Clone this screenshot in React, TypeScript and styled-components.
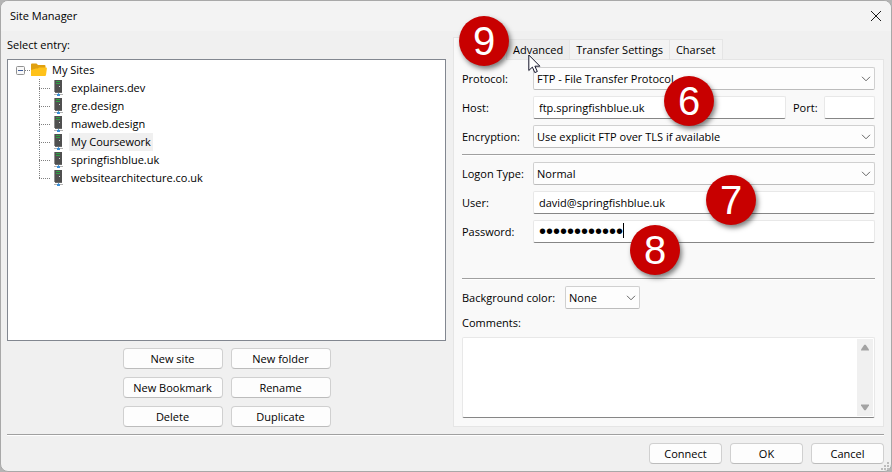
import React, { useState } from "react";
import styled, { createGlobalStyle } from "styled-components";

const GlobalStyle = createGlobalStyle`
  *, *::before, *::after { box-sizing: border-box; }
  html, body, #root { height: 100%; }
  body { margin: 0; background: #b4b4b4; }
  body, button, input, select, textarea {
    font-family: "Open Sans", "Noto Sans", sans-serif;
    font-size: 11px;
    line-height: 16px;
    color: #000;
  }
`;

const Dialog = styled.main`
  min-height: 100%;
  display: flex;
  flex-direction: column;
  background: #f0f0f0;
  border: 1px solid #a8a8a8;
  border-radius: 8px;
  overflow: hidden;
`;

const TitleBar = styled.header`
  display: flex;
  align-items: center;
  justify-content: space-between;
  height: 30px;
  padding: 0 9px;
  background: #f3f3f3;
`;

const Title = styled.h1`
  margin: 0;
  font-size: 11px;
  font-weight: 400;
`;

const CloseButton = styled.button`
  display: flex;
  padding: 0;
  border: 0;
  background: none;
`;

const Body = styled.div`
  flex: 1;
  display: grid;
  grid-template-columns: minmax(0, 439fr) minmax(0, 431fr);
  gap: 7px;
  padding: 6px 7px 7px 6px;
`;

const EntryColumn = styled.section`
  display: flex;
  flex-direction: column;
`;

const EntryLabel = styled.h2`
  margin: 0 0 6px;
  font-size: 11px;
  font-weight: 400;
`;

const TreeBox = styled.div`
  flex: 1;
  padding: 1px 8px;
  background: #fff;
  border: 1px solid #828790;
`;

const RootRow = styled.div`
  display: flex;
  align-items: center;
  height: 18px;
`;

const Expander = styled.button`
  display: flex;
  width: 9px;
  height: 9px;
  padding: 0;
  border: 0;
  background: none;
`;

const Dots = styled.span<{ $width: number }>`
  width: ${(p) => p.$width}px;
  height: 1px;
  background: repeating-linear-gradient(90deg, #808080 0 1px, transparent 1px 2px);
`;

const Branch = styled.ul`
  margin: 0 0 0 23px;
  padding: 0;
  list-style: none;
`;

const Leaf = styled.li`
  display: flex;
  align-items: center;
  height: 18px;
  background: repeating-linear-gradient(180deg, #808080 0 1px, transparent 1px 2px) 0 0 / 1px 100% no-repeat;

  &:last-child { background-size: 1px 50%; }
  svg { margin: 0 6px 0 4px; }
`;

const TreeLabel = styled.span<{ $selected?: boolean }>`
  padding: 1px 2px;
  background: ${(p) => (p.$selected ? "#f0f0f0" : "transparent")};
`;

const RootLabel = styled(TreeLabel)`
  margin-left: 3px;
`;

const ActionGrid = styled.div`
  display: grid;
  grid-template-columns: repeat(2, 100px);
  justify-content: center;
  gap: 8px;
  padding-top: 7px;
`;

const PushButton = styled.button`
  height: 21px;
  padding: 0 4px;
  background: #fdfdfd;
  border: 1px solid #d0d0d0;
  border-bottom-color: #bcbcbc;
  border-radius: 4px;
  white-space: nowrap;
`;

const Notebook = styled.section`
  display: flex;
  flex-direction: column;
`;

const TabList = styled.div`
  position: relative;
  display: flex;
  align-items: flex-end;
  height: 22px;
`;

const Tab = styled.button<{ $state?: "active" | "hover" }>`
  position: relative;
  height: ${(p) => (p.$state === "active" ? 23 : 20)}px;
  min-width: ${(p) => (p.$state === "active" ? 54 : 0)}px;
  margin-bottom: ${(p) => (p.$state === "active" ? -1 : 0)}px;
  padding: 0 6px;
  background: ${(p) => (p.$state === "active" ? "#f9f9f9" : p.$state === "hover" ? "#ececec" : "#f3f3f3")};
  border: 1px solid #e5e5e5;
  border-bottom: 0;
  border-left-width: ${(p) => (p.$state === "active" ? 1 : 0)}px;
  white-space: nowrap;
  z-index: ${(p) => (p.$state ? 1 : 0)};
`;

const Pointer = styled.svg`
  position: absolute;
  left: 21px;
  top: 14px;
  pointer-events: none;
`;

const Page = styled.form`
  flex: 1;
  display: flex;
  flex-direction: column;
  padding: 7px 8px 8px;
  background: #f9f9f9;
  border: 1px solid #e5e5e5;
`;

const Rows = styled.div`
  display: flex;
  flex-direction: column;
  gap: 6px;
`;

const Row = styled.div`
  display: flex;
  align-items: center;
  height: 23px;
`;

const RowLabel = styled.label`
  flex: 0 0 71px;
  white-space: nowrap;
`;

const ColorLabel = styled.label`
  flex: 0 0 103px;
  white-space: nowrap;
`;

const PortLabel = styled.label`
  flex: 0 0 38px;
  padding-left: 7px;
`;

const Field = styled.div<{ $width?: number }>`
  position: relative;
  flex: ${(p) => (p.$width ? `0 0 ${p.$width}px` : "1 1 0")};
  min-width: 0;
  display: flex;
  height: 23px;
`;

const TextInput = styled.input`
  width: 100%;
  padding: 0 5px;
  background: #fff;
  border: 1px solid #e8e8e8;
  border-bottom-color: #868686;
  border-radius: 2px;
  outline: none;

  &[type="password"] { font: 20px/20px "Liberation Sans", Arial, sans-serif; }
`;

const DropDown = styled.select`
  appearance: none;
  width: 100%;
  padding: 0 20px 0 3px;
  background: #fdfdfd;
  border: 1px solid #d0d0d0;
  border-bottom-color: #bcbcbc;
  border-radius: 2px;
  outline: none;
`;

const Chevron = styled.svg`
  position: absolute;
  right: 4px;
  top: 9px;
  pointer-events: none;
`;

const Caret = styled.span`
  position: absolute;
  left: 90px;
  top: 3px;
  width: 1px;
  height: 15px;
  background: #000;
`;

const Rule = styled.hr<{ $before: number }>`
  width: 100%;
  height: 2px;
  margin: ${(p) => p.$before}px 0 6px;
  border: 0;
  border-top: 1px solid #a0a0a0;
  border-bottom: 1px solid #fff;
`;

const CommentsLabel = styled.label`
  margin: 6px 0;
`;

const CommentsBox = styled.div`
  flex: 1;
  display: flex;
  min-height: 81px;
  padding: 1px;
  background: #fff;
  border: 1px solid #e8e8e8;
  border-bottom-color: #868686;
  border-radius: 2px;
`;

const Comments = styled.textarea`
  flex: 1;
  min-width: 0;
  padding: 2px 4px;
  border: 0;
  outline: none;
  resize: none;
  background: none;
`;

const ScrollTrack = styled.div`
  display: flex;
  flex-direction: column;
  align-items: center;
  justify-content: space-between;
  width: 16px;
  padding: 5px 0;
  background: #f0f0f0;
`;

const ScrollButton = styled.button`
  display: flex;
  padding: 0;
  border: 0;
  background: none;
`;

const Badge = styled.span<{ $left: number; $top: number }>`
  position: absolute;
  left: ${(p) => p.$left}px;
  top: ${(p) => p.$top}px;
  z-index: 2;
  width: 50px;
  height: 50px;
  border-radius: 50%;
  background: #c80000;
  box-shadow: 2px 3px 5px rgba(0, 0, 0, 0.5);
  color: #fff;
  font: 40px/50px "Liberation Sans", Arial, sans-serif;
  text-align: center;
  pointer-events: none;
`;

const Footer = styled.footer`
  position: relative;
  display: flex;
  justify-content: flex-end;
  gap: 8px;
  margin: 0 7px 0 6px;
  padding: 8px 0 7px;
  border-top: 1px solid #a0a0a0;
  box-shadow: inset 0 1px #fff;

  ${PushButton} { width: 73px; }
`;

const Grip = styled.svg`
  position: absolute;
  right: -5px;
  bottom: 1px;
`;

const ServerIcon = () => (
  <svg width="9" height="16" viewBox="0 0 9 16" aria-hidden="true">
    <path d="M1 0h7v12H1z" fill="#505050" />
    <path d="M0 0h1v12H0z" fill="#909090" />
    <path d="M2 1.500h4M2 3.500h4" stroke="#2fa044" />
    <path d="M5 6h1v1H5z" fill="#ddd" />
    <path d="M1 12h7v1H1z" fill="#6b6b6b" />
    <path d="M4 13h1v1H4z" fill="#5c9cd0" />
    <path d="M0 14h9v1H0z" fill="#b4b4b4" />
    <path d="M3 14h3v2H3z" fill="#3c90d8" />
  </svg>
);

const FolderIcon = () => (
  <svg width="16" height="14" viewBox="0 0 16 14" aria-hidden="true">
    <path d="M0 1.500Q0 .5 1 .5h4.500L7 2h6.500q1 0 1 1v8H0z" fill="#e0a010" />
    <path d="M0 12.500V7l5-1.500h2L8 4.500h7q1 0 .9 1l-.9 6.500q-.2 1-1 1H.8q-.8 0-.8-.5z" fill="#ffc21a" />
  </svg>
);

const Arrow = () => (
  <Chevron width="10" height="6" viewBox="0 0 10 6" aria-hidden="true">
    <path d="M1 .8l4 4 4-4" fill="none" stroke="#666" />
  </Chevron>
);

const SITES = ["explainers.dev", "gre.design", "maweb.design", "My Coursework", "springfishblue.uk", "websitearchitecture.co.uk"];
const ACTIONS = ["New site", "New folder", "New Bookmark", "Rename", "Delete", "Duplicate"];

type SelectProps = { id: string; value: string; width?: number };

const SelectField = ({ id, value, width }: SelectProps) => (
  <Field $width={width}>
    <DropDown id={id} defaultValue={value}>
      <option>{value}</option>
    </DropDown>
    <Arrow />
  </Field>
);

export default function App() {
  const [open, setOpen] = useState(true);
  const [selected, setSelected] = useState("My Coursework");

  return (
    <>
      <GlobalStyle />
      <Dialog>
        <TitleBar>
          <Title>Site Manager</Title>
          <CloseButton aria-label="Close">
            <svg width="12" height="12" viewBox="0 0 12 12">
              <path d="M1 1l10 10M11 1L1 11" stroke="#1a1a1a" fill="none" />
            </svg>
          </CloseButton>
        </TitleBar>
        <Body>
          <EntryColumn>
            <EntryLabel>Select entry:</EntryLabel>
            <TreeBox role="tree" aria-label="Select entry">
              <RootRow role="treeitem" aria-expanded={open}>
                <Expander aria-label="Toggle My Sites" onClick={() => setOpen(!open)}>
                  <svg width="9" height="9" viewBox="0 0 9 9">
                    <rect x=".5" y=".5" width="8" height="8" rx="1" fill="#f8f8f8" stroke="#919191" />
                    <path d="M2 4.500h5" stroke="#3c5a9a" />
                  </svg>
                </Expander>
                <Dots $width={6} />
                <FolderIcon />
                <RootLabel>My Sites</RootLabel>
              </RootRow>
              {open && (
                <Branch role="group">
                  {SITES.map((site) => (
                    <Leaf key={site} role="treeitem" onClick={() => setSelected(site)}>
                      <Dots $width={11} />
                      <ServerIcon />
                      <TreeLabel $selected={site === selected}>{site}</TreeLabel>
                    </Leaf>
                  ))}
                </Branch>
              )}
            </TreeBox>
            <ActionGrid>
              {ACTIONS.map((name) => (
                <PushButton key={name}>{name}</PushButton>
              ))}
            </ActionGrid>
          </EntryColumn>
          <Notebook>
            <TabList role="tablist">
              <Tab role="tab" aria-selected aria-label="General" $state="active" />
              <Tab role="tab" $state="hover">
                Advanced
                <Pointer width="13" height="20" viewBox="0 0 13 20" aria-hidden="true">
                  <path d="M.8 1v15.500l3.600-3.400 2.400 5.500 2.500-1.100-2.400-5.300h5z" fill="#fff" stroke="#15152a" strokeLinejoin="round" />
                </Pointer>
              </Tab>
              <Tab role="tab">Transfer Settings</Tab>
              <Tab role="tab">Charset</Tab>
              <Badge $left={6} $top={-21}>9</Badge>
            </TabList>
            <Page onSubmit={(e) => e.preventDefault()}>
              <Rows>
                <Row>
                  <RowLabel htmlFor="protocol">Protocol:</RowLabel>
                  <SelectField id="protocol" value="FTP - File Transfer Protocol" />
                </Row>
                <Row>
                  <RowLabel htmlFor="host">Host:</RowLabel>
                  <Field>
                    <TextInput id="host" defaultValue="ftp.springfishblue.uk" />
                    <Badge $left={131} $top={-20}>6</Badge>
                  </Field>
                  <PortLabel htmlFor="port">Port:</PortLabel>
                  <Field $width={51}>
                    <TextInput id="port" />
                  </Field>
                </Row>
                <Row>
                  <RowLabel htmlFor="encryption">Encryption:</RowLabel>
                  <SelectField id="encryption" value="Use explicit FTP over TLS if available" />
                </Row>
              </Rows>
              <Rule $before={6} />
              <Rows>
                <Row>
                  <RowLabel htmlFor="logon">Logon Type:</RowLabel>
                  <SelectField id="logon" value="Normal" />
                </Row>
                <Row>
                  <RowLabel htmlFor="user">User:</RowLabel>
                  <Field>
                    <TextInput id="user" defaultValue="david@springfishblue.uk" />
                    <Badge $left={173} $top={-16}>7</Badge>
                  </Field>
                </Row>
                <Row>
                  <RowLabel htmlFor="password">Password:</RowLabel>
                  <Field>
                    <TextInput id="password" type="password" autoComplete="off" defaultValue="coursework12" />
                    <Caret />
                    <Badge $left={97} $top={5}>8</Badge>
                  </Field>
                </Row>
              </Rows>
              <Rule $before={35} />
              <Row>
                <ColorLabel htmlFor="color">Background color:</ColorLabel>
                <SelectField id="color" value="None" width={75} />
              </Row>
              <CommentsLabel htmlFor="comments">Comments:</CommentsLabel>
              <CommentsBox>
                <Comments id="comments" />
                <ScrollTrack>
                  <ScrollButton type="button" aria-label="Scroll up">
                    <svg width="8" height="7" viewBox="0 0 8 7"><path d="M3.300.8h1.400L8 5.500V6.500H0V5.500z" fill="#a3a3a3" /></svg>
                  </ScrollButton>
                  <ScrollButton type="button" aria-label="Scroll down">
                    <svg width="8" height="7" viewBox="0 0 8 7"><path d="M3.300 6.200h1.400L8 1.500V.5H0v1z" fill="#a3a3a3" /></svg>
                  </ScrollButton>
                </ScrollTrack>
              </CommentsBox>
            </Page>
          </Notebook>
        </Body>
        <Footer>
          <PushButton>Connect</PushButton>
          <PushButton>OK</PushButton>
          <PushButton>Cancel</PushButton>
          <Grip width="8" height="8" viewBox="0 0 8 8" aria-hidden="true">
            <path d="M6 0h2v2H6zM3 3h2v2H3zM6 3h2v2H6zM0 6h2v2H0zM3 6h2v2H3zM6 6h2v2H6z" fill="#bcbcbc" />
          </Grip>
        </Footer>
      </Dialog>
    </>
  );
}
